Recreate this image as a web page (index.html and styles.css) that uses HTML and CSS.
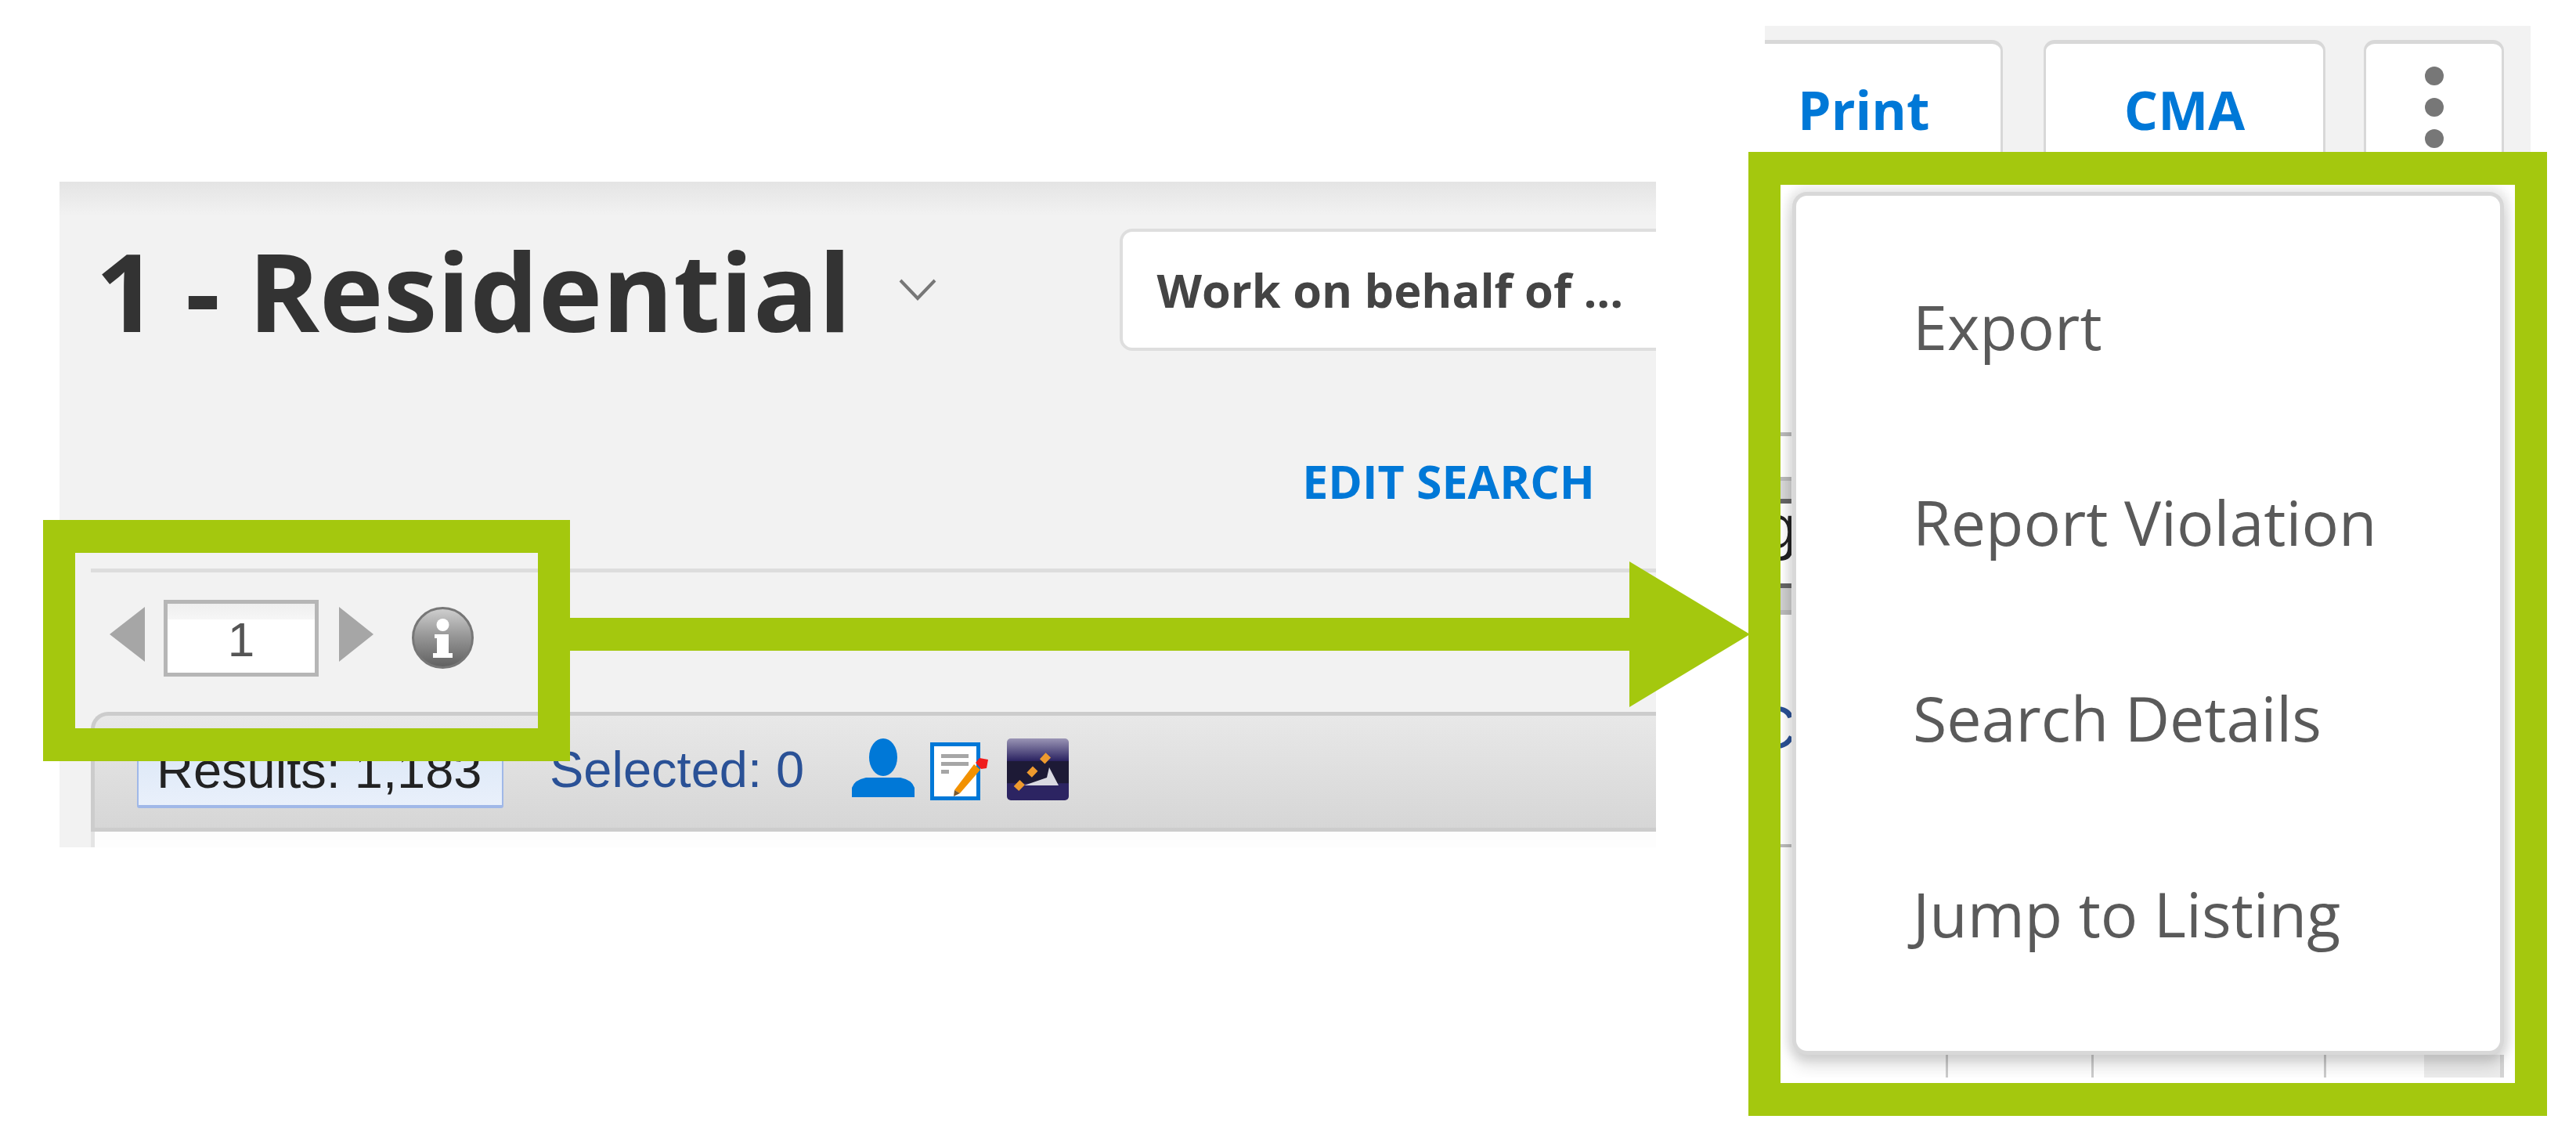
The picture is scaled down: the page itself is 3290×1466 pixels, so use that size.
FILE: index.html
```html
<!DOCTYPE html>
<html lang="en">
<head>
    <meta charset="UTF-8">
    <meta name="viewport" content="width=device-width, initial-scale=1.0">
    <title>Export menu location</title>
    <link rel="stylesheet" href="styles.css">
</head>
<body>

<div class="stage">

    <div class="results-panel">
        <div class="title-row">
            <h1 class="title">1 - Residential</h1>
            <svg class="chevron" viewBox="0 0 48 28"><path d="M2 2 L24 25 L46 2" fill="none" stroke="#777" stroke-width="4"/></svg>
            <div class="behalf-btn">Work on behalf of ...</div>
        </div>
        <div class="edit-row"><a class="edit-link">EDIT SEARCH</a></div>
        <div class="pager-row">
            <span class="tri tri-left"></span>
            <div class="page-box">1</div>
            <span class="tri tri-right"></span>
            <svg class="info-icon" viewBox="0 0 79 79">
                <defs>
                    <linearGradient id="infoFill" x1="0" y1="0" x2="0" y2="1">
                        <stop offset="0" stop-color="#d0d0d0"/>
                        <stop offset="0.45" stop-color="#999"/>
                        <stop offset="1" stop-color="#5f5f5f"/>
                    </linearGradient>
                </defs>
                <circle cx="39.5" cy="39.5" r="38" fill="url(#infoFill)" stroke="#777" stroke-width="3"/>
                <circle cx="39.5" cy="23" r="8" fill="#fff"/>
                <rect x="32" y="35" width="15" height="27" fill="#fff"/>
                <rect x="27" y="59" width="25" height="6" fill="#fff"/>
                <rect x="29" y="35" width="5" height="5" fill="#fff"/>
            </svg>
        </div>
        <div class="toolbar">
            <div class="results-badge">Results: 1,183</div>
            <div class="selected">Selected: 0</div>
            <svg class="icon-person" viewBox="0 0 80 75">
                <ellipse cx="40" cy="24" rx="18" ry="24" fill="#0078d7"/>
                <path d="M0 75 V63 Q3 53 18 50 H62 Q77 53 80 63 V75 Z" fill="#0078d7"/>
            </svg>
            <svg class="icon-note" viewBox="0 0 74 79">
                <rect x="2.500" y="7.500" width="59" height="69" fill="#fff" stroke="#0078d7" stroke-width="5"/>
                <rect x="14" y="20" width="35" height="5" fill="#a6a6a6"/>
                <rect x="14" y="30" width="35" height="5" fill="#a6a6a6"/>
                <rect x="14" y="40" width="10" height="5" fill="#a6a6a6"/>
                <path d="M31 66 L56 33 L64 40 L38 70 Z" fill="#f29100"/>
                <path d="M31 66 L38 70 L30 74 Z" fill="#7a5a30"/>
                <path d="M58 31 L63 25 L74 27 L72 38 L65 39 Z" fill="#ef1c1c"/>
            </svg>
            <svg class="icon-chart" viewBox="0 0 79 79">
                <defs>
                    <linearGradient id="chartFill" x1="0" y1="0" x2="0" y2="1">
                        <stop offset="0" stop-color="#9a95b5"/>
                        <stop offset="0.36" stop-color="#2c2462"/>
                        <stop offset="0.37" stop-color="#1d1a36"/>
                        <stop offset="0.72" stop-color="#1d1a36"/>
                        <stop offset="0.73" stop-color="#2c2462"/>
                        <stop offset="1" stop-color="#2c2462"/>
                    </linearGradient>
                </defs>
                <rect width="79" height="79" rx="5" fill="url(#chartFill)"/>
                <path d="M22 60 H66 L54 37 L51 50 Z" fill="#d9d9e2"/>
                <path d="M12 64 L58 16" fill="none" stroke="#ee9a2e" stroke-width="9" stroke-dasharray="11 13"/>
            </svg>
        </div>
        <div class="results-table"></div>
    </div>

    <div class="detail-panel">
        <div class="tabs">
            <div class="tab tab-print">Print</div>
            <div class="tab tab-cma">CMA</div>
            <div class="tab tab-more">
                <span class="dot"></span>
                <span class="dot"></span>
                <span class="dot"></span>
            </div>
        </div>
        <div class="detail-body">
            <div class="table-edge">
                <span class="edge-line edge-line-a"></span>
                <span class="edge-line edge-line-b"></span>
                <span class="edge-shade"></span>
                <span class="edge-rule"></span>
                <span class="edge-text edge-text-g">g</span>
                <span class="edge-rule edge-rule-low"></span>
                <span class="edge-block"></span>
                <span class="edge-text edge-text-c">C</span>
                <span class="edge-line edge-line-c"></span>
            </div>
            <div class="table-foot">
                <span class="foot-cell foot-a"></span>
                <span class="foot-cell foot-b"></span>
                <span class="foot-cell foot-c"></span>
                <span class="foot-cell foot-d"></span>
                <span class="foot-cell foot-e"></span>
            </div>
            <ul class="more-menu">
                <li>Export</li>
                <li>Report Violation</li>
                <li>Search Details</li>
                <li>Jump to Listing</li>
            </ul>
        </div>
    </div>

    <div class="callout callout-pager"></div>
    <div class="callout callout-menu"></div>
    <svg class="arrow" viewBox="0 0 1507 186"><polygon points="0,72 1353,72 1353,0 1507,93 1353,186 1353,114 0,114" fill="#a4c80e"/></svg>
</div>

</body>
</html>
```
FILE: styles.css
```css
html, body {
    margin: 0;
    background-color: #fff;
}
.stage {
    position: relative;
    display: flex;
    align-items: flex-start;
    height: 1466px;
    padding-left: 76px;
    overflow: hidden;
    font-family: "Open Sans", sans-serif;
}

/* left crop */
.results-panel {
    flex: none;
    width: 2039px;
    height: 850px;
    margin-top: 232px;
    overflow: hidden;
    background: linear-gradient(#e4e4e4, #f2f2f2 44px);
}
.title-row {
    display: flex;
    align-items: center;
    height: 156px;
    padding: 60px 0 0 46px;
}
.title {
    flex: none;
    margin: 0;
    font-size: 138px;
    font-weight: 700;
    line-height: 156px;
    color: #333;
}
.chevron {
    flex: none;
    width: 48px;
    height: 28px;
    margin: 0 0 0 61px;
}
.behalf-btn {
    flex: none;
    box-sizing: border-box;
    width: 760px;
    height: 156px;
    margin-left: 234px;
    padding: 34px 0 0 43px;
    font-size: 59.5px;
    font-weight: 700;
    line-height: 80px;
    color: #444;
    background-color: #fff;
    border: 4px solid #dedede;
    border-radius: 16px;
}
.edit-row {
    box-sizing: border-box;
    height: 278px;
    padding: 126px 78px 0 0;
    text-align: right;
}
.edit-link {
    font-size: 59px;
    font-weight: 700;
    line-height: 80px;
    color: #0078d7;
}
.pager-row {
    display: flex;
    align-items: flex-start;
    box-sizing: border-box;
    height: 183px;
    margin-left: 40px;
    padding: 35px 0 0 24px;
    border-top: 5px solid #ddd;
}
.tri {
    flex: none;
    width: 0;
    height: 0;
    margin-top: 9px;
    border-top: 35px solid transparent;
    border-bottom: 35px solid transparent;
}
.tri-left {
    border-right: 45px solid #a6a6a6;
}
.tri-right {
    border-left: 44px solid #a6a6a6;
}
.page-box {
    flex: none;
    box-sizing: border-box;
    width: 198px;
    height: 98px;
    margin: 0 26px 0 24px;
    font-family: "Liberation Sans", Arial, sans-serif;
    font-size: 62px;
    line-height: 92px;
    text-align: center;
    color: #555;
    background: linear-gradient(#efefef, #f6f6f6 20px, #fff 20px);
    border: 5px solid #b6b6b6;
}
.info-icon {
    flex: none;
    width: 79px;
    height: 79px;
    margin: 9px 0 0 49px;
}
.toolbar {
    display: flex;
    align-items: flex-start;
    box-sizing: border-box;
    height: 153px;
    margin-left: 40px;
    padding: 29px 0 0 54px;
    font-family: "Liberation Sans", Arial, sans-serif;
    font-size: 65px;
    line-height: 58px;
    background: linear-gradient(#e8e8e8, #d6d6d6);
    border: 5px solid #ccc;
    border-right: 0;
    border-top-left-radius: 22px;
}
.results-badge {
    flex: none;
    box-sizing: border-box;
    width: 468px;
    height: 82px;
    margin-top: 7px;
    padding: 3px 0 0 23px;
    white-space: nowrap;
    color: #222;
    background: linear-gradient(#dbe7f6, #e9f0fb);
    border: 2px solid #a0b8e8;
    border-bottom-width: 4px;
    border-radius: 3px;
}
.selected {
    flex: none;
    width: 324px;
    margin: 11px 0 0 59px;
    white-space: nowrap;
    color: #2a5196;
}
.icon-person {
    flex: none;
    width: 80px;
    height: 75px;
    margin-left: 62px;
}
.icon-note {
    flex: none;
    width: 74px;
    height: 79px;
    margin-left: 20px;
}
.icon-chart {
    flex: none;
    width: 79px;
    height: 79px;
    margin-left: 24px;
}
.results-table {
    height: 20px;
    margin-left: 40px;
    background-color: #fdfdfd;
    border-left: 5px solid #e4e4e4;
}

/* right crop */
.detail-panel {
    flex: none;
    width: 978px;
    margin: 33px 0 0 139px;
}
.tabs {
    display: flex;
    align-items: flex-start;
    box-sizing: border-box;
    height: 161px;
    padding-top: 18px;
    overflow: hidden;
    background-color: #f2f2f2;
}
.tab {
    flex: none;
    box-sizing: border-box;
    height: 180px;
    padding-top: 44px;
    font-size: 68px;
    font-weight: 700;
    line-height: 80px;
    color: #0078d7;
    background-color: #fff;
    border: 3px solid #d8d8d8;
    border-top-width: 5px;
    border-radius: 14px 14px 0 0;
}
.tab-print {
    width: 304px;
    padding-left: 42px;
    border-left: 0;
    border-top-left-radius: 0;
}
.tab-cma {
    width: 360px;
    margin-left: 52px;
    text-align: center;
}
.tab-more {
    display: flex;
    flex-direction: column;
    align-items: center;
    gap: 16px;
    width: 179px;
    margin-left: 49px;
    padding-top: 29px;
}
.dot {
    flex: none;
    width: 24px;
    height: 24px;
    background-color: #777;
    border-radius: 50%;
}
.detail-body {
    position: relative;
    display: flex;
    height: 1182px;
    overflow: hidden;
    background-color: #fff;
}
.table-edge {
    display: flex;
    flex-direction: column;
    flex: none;
    width: 34px;
    overflow: hidden;
    font-family: "Liberation Sans", Arial, sans-serif;
}
.edge-line {
    flex: none;
    height: 5px;
    background-color: #bbb;
}
.edge-line-a {
    margin-top: 358px;
}
.edge-line-b {
    margin-top: 52px;
}
.edge-shade {
    flex: none;
    height: 23px;
    background-color: #d8d8d8;
}
.edge-rule {
    flex: none;
    height: 6px;
    background-color: #666;
}
.edge-rule-low {
    margin-top: 42px;
}
.edge-text {
    flex: none;
    white-space: nowrap;
}
.edge-text-g {
    margin-left: -2px;
    font-size: 78px;
    line-height: 60px;
    color: #222;
}
.edge-block {
    flex: none;
    box-sizing: border-box;
    height: 34px;
    background-color: #d0d0d0;
    border-bottom: 6px solid #bbb;
}
.edge-text-c {
    margin: 114px 0 0 -15px;
    font-size: 76px;
    line-height: 60px;
    color: #2a5196;
}
.edge-line-c {
    margin-top: 119px;
    height: 4px;
}
.table-foot {
    display: flex;
    flex: none;
    align-items: flex-start;
    box-sizing: border-box;
    height: 1182px;
    padding: 1153px 0 0 197px;
}
.foot-cell {
    flex: none;
    box-sizing: border-box;
    height: 29px;
    border-left: 3px solid #ccc;
}
.foot-a {
    width: 186px;
}
.foot-b {
    width: 297px;
}
.foot-c {
    width: 128px;
}
.foot-d {
    width: 97px;
    background-color: #ececec;
    border-left: 0;
}
.foot-e {
    width: 5px;
    background-color: #d4d4d4;
    border-left: 0;
}
.more-menu {
    position: absolute;
    left: 40px;
    top: 56px;
    box-sizing: border-box;
    width: 899px;
    height: 1092px;
    margin: 0;
    padding: 42px 0 0 149px;
    list-style: none;
    font-size: 79px;
    font-weight: 400;
    line-height: 250px;
    color: #5a5a5a;
    background-color: #fff;
    border-radius: 14px;
    box-shadow: 0 0 0 5px #d8d8d8, 0 0 12px 12px rgba(0, 0, 0, 0.09), 0 16px 20px 4px rgba(0, 0, 0, 0.12);
}

/* annotation */
.callout {
    position: absolute;
    box-sizing: border-box;
    border-style: solid;
    border-color: #a4c80e;
    border-width: 42px 41px;
}
.callout-pager {
    left: 55px;
    top: 664px;
    width: 673px;
    height: 308px;
}
.callout-menu {
    left: 2233px;
    top: 194px;
    width: 1020px;
    height: 1231px;
}
.arrow {
    position: absolute;
    left: 728px;
    top: 717px;
    width: 1507px;
    height: 186px;
}
```
